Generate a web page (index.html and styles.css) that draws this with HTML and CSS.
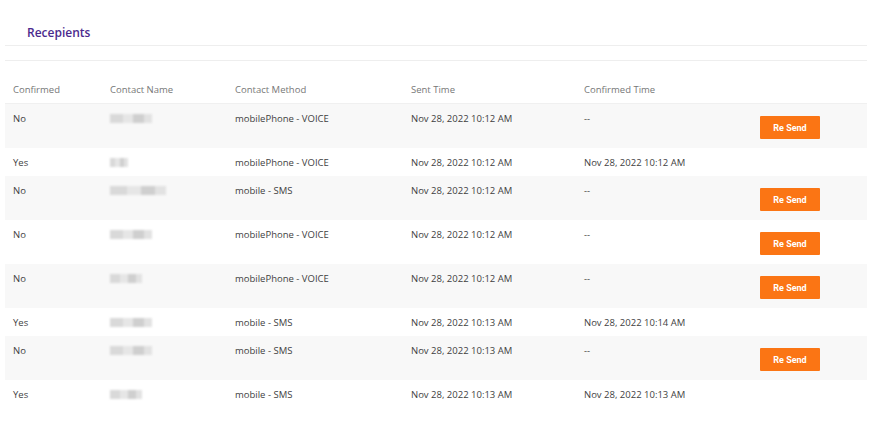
FILE: index.html
```html
<!DOCTYPE html>
<html lang="en">
<head>
<meta charset="UTF-8">
<meta name="viewport" content="width=device-width, initial-scale=1.0">
<title>Recepients</title>
<link rel="stylesheet" href="styles.css">
</head>
<body>
<div class="panel">
    <div class="panel-title">Recepients</div>
    <div class="spacer"></div>

    <table class="recipients">
        <colgroup>
            <col class="c-confirmed">
            <col class="c-name">
            <col class="c-method">
            <col class="c-sent">
            <col class="c-conf-time">
            <col>
        </colgroup>
        <thead>
            <tr>
                <th>Confirmed</th>
                <th>Contact Name</th>
                <th>Contact Method</th>
                <th>Sent Time</th>
                <th>Confirmed Time</th>
                <th></th>
            </tr>
        </thead>
        <tbody>
            <tr>
                <td>No</td>
                <td><span class="blur w42"></span></td>
                <td>mobilePhone - VOICE</td>
                <td>Nov 28, 2022 10:12 AM</td>
                <td>--</td>
                <td><button class="resend">Re Send</button></td>
            </tr>
            <tr>
                <td>Yes</td>
                <td><span class="blur w18"></span></td>
                <td>mobilePhone - VOICE</td>
                <td>Nov 28, 2022 10:12 AM</td>
                <td>Nov 28, 2022 10:12 AM</td>
                <td></td>
            </tr>
            <tr>
                <td>No</td>
                <td><span class="blur w56"></span></td>
                <td>mobile - SMS</td>
                <td>Nov 28, 2022 10:12 AM</td>
                <td>--</td>
                <td><button class="resend">Re Send</button></td>
            </tr>
            <tr>
                <td>No</td>
                <td><span class="blur w42"></span></td>
                <td>mobilePhone - VOICE</td>
                <td>Nov 28, 2022 10:12 AM</td>
                <td>--</td>
                <td><button class="resend">Re Send</button></td>
            </tr>
            <tr>
                <td>No</td>
                <td><span class="blur w32"></span></td>
                <td>mobilePhone - VOICE</td>
                <td>Nov 28, 2022 10:12 AM</td>
                <td>--</td>
                <td><button class="resend">Re Send</button></td>
            </tr>
            <tr>
                <td>Yes</td>
                <td><span class="blur w42"></span></td>
                <td>mobile - SMS</td>
                <td>Nov 28, 2022 10:13 AM</td>
                <td>Nov 28, 2022 10:14 AM</td>
                <td></td>
            </tr>
            <tr>
                <td>No</td>
                <td><span class="blur w42"></span></td>
                <td>mobile - SMS</td>
                <td>Nov 28, 2022 10:13 AM</td>
                <td>--</td>
                <td><button class="resend">Re Send</button></td>
            </tr>
            <tr>
                <td>Yes</td>
                <td><span class="blur w32"></span></td>
                <td>mobile - SMS</td>
                <td>Nov 28, 2022 10:13 AM</td>
                <td>Nov 28, 2022 10:13 AM</td>
                <td></td>
            </tr>
        </tbody>
    </table>
</div>
</body>
</html>
```

FILE: styles.css
```css
body {
    margin: 0;
    background: #fff;
    font-family: "Open Sans", "DejaVu Sans", sans-serif;
    color: #444;
}

.panel {
    width: 862px;
    margin-left: 5px;
    padding-top: 24px;
}

.panel-title {
    padding: 0 0 4px 22px;
    font-size: 12px;
    font-weight: 600;
    color: #4b2a8e;
    line-height: 17px;
    border-bottom: 1px solid #eeeeee;
}

.spacer {
    height: 14px;
    border-bottom: 1px solid #eeeeee;
}

.recipients {
    width: 100%;
    margin-top: 14px;
    border-collapse: collapse;
    table-layout: fixed;
    font-size: 9.5px;
}

.c-confirmed { width: 97px; }
.c-name { width: 125px; }
.c-method { width: 176px; }
.c-sent { width: 173px; }
.c-conf-time { width: 176px; }

.recipients th,
.recipients td {
    padding: 8px 5px 6px 8px;
    height: 14px;
    line-height: 14px;
    text-align: left;
    vertical-align: top;
    white-space: nowrap;
}

.recipients th {
    font-weight: 400;
    color: #777;
    border-bottom: 1px solid #f0f0f0;
}

.recipients td {
    color: #3f3f3f;
}

.recipients tbody tr:nth-child(odd) {
    background: #f8f8f8;
}

.blur {
    display: inline-block;
    vertical-align: top;
    height: 9px;
    margin-top: 2px;
    background: linear-gradient(90deg, #d9d9d9 0 30%, #e6e6e6 30% 55%, #cfcfcf 55% 80%, #e2e2e2 80%);
    filter: blur(1px);
}

.w18 { width: 18px; }
.w32 { width: 32px; }
.w42 { width: 42px; }
.w56 { width: 56px; }

.resend {
    display: block;
    width: 60px;
    height: 23px;
    margin: 4px 0 3px 0;
    border: none;
    border-radius: 1px;
    background: #fb7514;
    color: #fff;
    font-family: Roboto, "Liberation Sans", sans-serif;
    font-size: 9px;
    font-weight: 700;
    cursor: pointer;
}
```
